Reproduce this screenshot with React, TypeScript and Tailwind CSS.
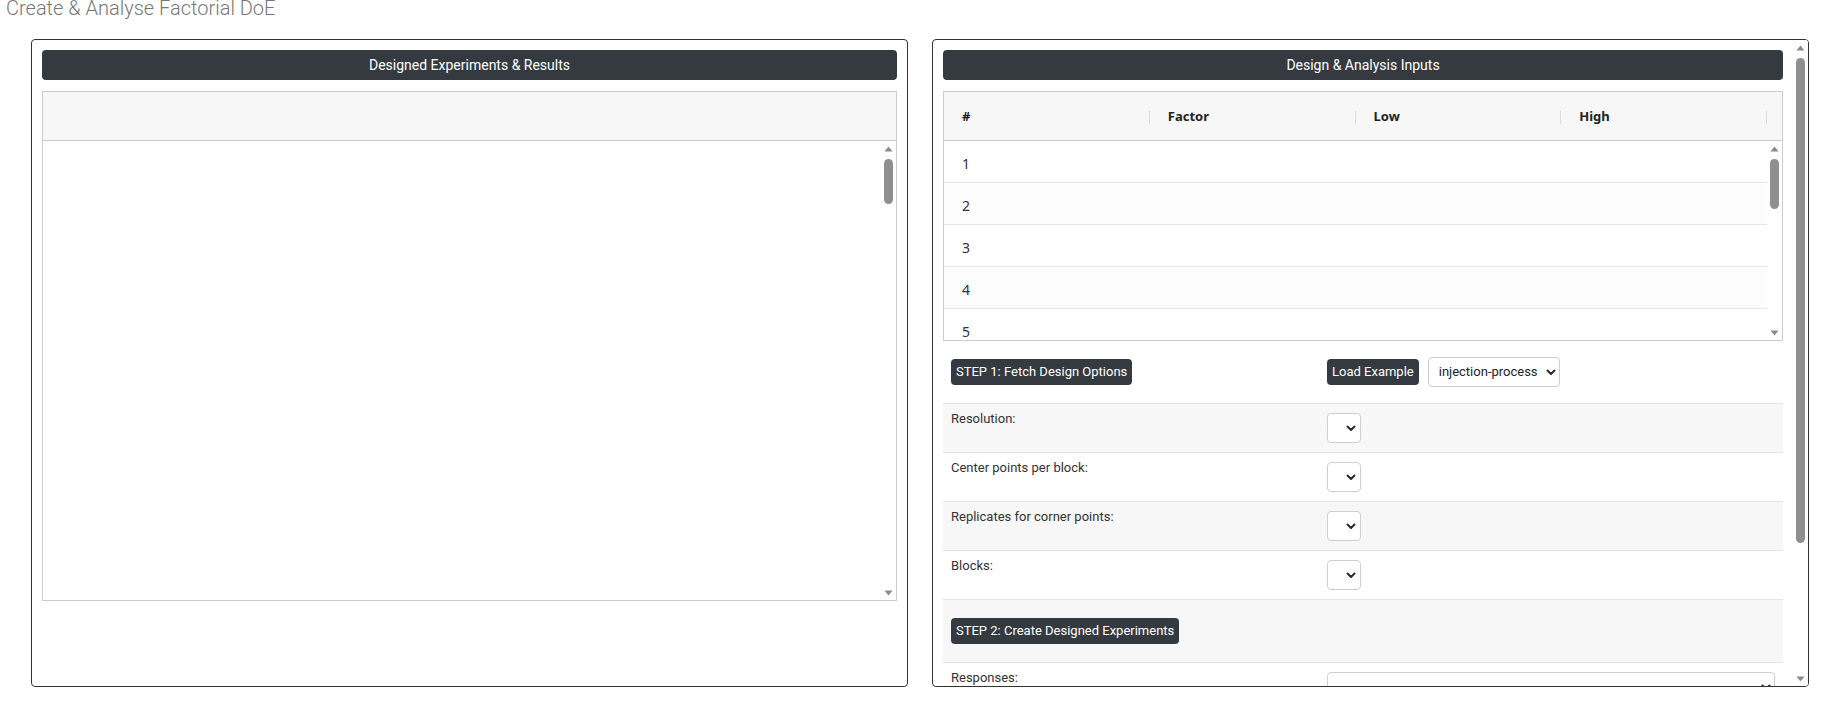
import React from "react";

function UpArrow() {
  return (
    <div className="flex h-[15px] w-full shrink-0 items-center justify-center">
      <svg width="9" height="6" viewBox="0 0 9 6">
        <path d="M4.5 0.5L8.5 5.5H0.5Z" fill="#8a8a8a" />
      </svg>
    </div>
  );
}

function DownArrow() {
  return (
    <div className="flex h-[15px] w-full shrink-0 items-center justify-center">
      <svg width="9" height="6" viewBox="0 0 9 6">
        <path d="M0.5 0.5H8.5L4.5 5.5Z" fill="#8a8a8a" />
      </svg>
    </div>
  );
}

function ScrollBar({ thumb }: { thumb: string }) {
  return (
    <div className="flex w-[15px] shrink-0 flex-col items-center bg-white">
      <UpArrow />
      <div className="flex min-h-0 w-full flex-1 flex-col items-center">
        <div className={"w-[9px] shrink-0 rounded-full bg-[#8f8f8f] " + thumb} />
      </div>
      <DownArrow />
    </div>
  );
}

function Chevron() {
  return (
    <svg width="10" height="7" viewBox="0 0 10 7">
      <path d="M1.5 1.5L5 5L8.5 1.5" fill="none" stroke="#2b2b2b" strokeWidth="2" strokeLinecap="round" strokeLinejoin="round" />
    </svg>
  );
}

function HeaderBar({ children }: { children: React.ReactNode }) {
  return (
    <div className="flex h-[30px] items-center justify-center rounded-[4px] bg-[#343a40] text-[14px] font-normal text-white">
      {children}
    </div>
  );
}

function DarkButton({ children }: { children: React.ReactNode }) {
  return (
    <div className="inline-flex h-[26px] shrink-0 items-center whitespace-nowrap rounded-[4px] bg-[#343a40] px-[5px] text-[13px] font-normal text-white">
      {children}
    </div>
  );
}

function SmallSelect() {
  return (
    <div className="flex h-[30px] w-[34px] items-center justify-end rounded-[4px] border border-[#cfcfcf] bg-white pr-[4px]">
      <Chevron />
    </div>
  );
}

function OptionRow({ label, gray }: { label: string; gray: boolean }) {
  return (
    <div className={"flex h-[49px] border-t border-[#e4e4e4] " + (gray ? "bg-[#f7f7f7]" : "bg-white")}>
      <div className="w-[376px] shrink-0 pl-[8px] pt-[5px] text-[13px] leading-[20px] text-[#333]">{label}</div>
      <div className="flex items-center pl-[8px]">
        <SmallSelect />
      </div>
    </div>
  );
}

function LeftPanel() {
  return (
    <div className="h-[648px] rounded-[4px] border border-[#333] px-[10px] pt-[10px]">
      <HeaderBar>Designed Experiments &amp; Results</HeaderBar>
      <div className="mt-[11px] flex h-[510px] flex-col border border-[#cccccc]">
        <div className="h-[49px] shrink-0 border-b border-[#cccccc] bg-[#f7f7f7]" />
        <div className="flex min-h-0 flex-1">
          <div className="flex-1" />
          <ScrollBar thumb="mt-[3px] h-[45px]" />
        </div>
      </div>
    </div>
  );
}

const cols = ["#", "Factor", "Low", "High"];

function RightPanel() {
  const rows = [1, 2, 3, 4, 5, 6];
  return (
    <div className="flex h-[648px] overflow-hidden rounded-[4px] border border-[#333]">
      <div className="min-w-0 flex-1 px-[10px] pt-[10px]">
        <HeaderBar>Design &amp; Analysis Inputs</HeaderBar>
        <div className="mt-[11px] flex h-[250px] flex-col border border-[#cccccc] font-['Noto_Sans',sans-serif]">
          <div className="flex h-[49px] shrink-0 border-b border-[#cccccc] bg-[#f7f7f7]">
            {cols.map((c) => (
              <div key={c} className="flex flex-1 items-center justify-between pl-[18px] pt-[2px] text-[13px] font-bold text-[#222]">
                <span>{c}</span>
                <span className="h-[13px] w-px bg-[#dddddd]" />
              </div>
            ))}
            <div className="w-[15px] shrink-0" />
          </div>
          <div className="flex min-h-0 flex-1">
            <div className="min-w-0 flex-1 overflow-hidden">
              {rows.map((r) => (
                <div
                  key={r}
                  className={"flex h-[42px] items-center border-b border-[#e6e6e6] pl-[18px] pt-[4px] text-[14px] text-[#333] " + (r % 2 === 0 ? "bg-[#fcfcfc]" : "bg-white")}
                >
                  {r}
                </div>
              ))}
            </div>
            <ScrollBar thumb="mt-[3px] h-[50px]" />
          </div>
        </div>

        <div className="flex h-[62px] items-center bg-white">
          <div className="w-[376px] shrink-0 pl-[8px]">
            <DarkButton>STEP 1: Fetch Design Options</DarkButton>
          </div>
          <div className="flex items-center gap-[9px] pl-[8px]">
            <DarkButton>Load Example</DarkButton>
            <div className="flex h-[30px] w-[132px] items-center justify-between rounded-[4px] border border-[#cfcfcf] bg-white pl-[10px] pr-[3px] text-[13px] text-[#212529]">
              <span>injection-process</span>
              <Chevron />
            </div>
          </div>
        </div>

        <OptionRow label="Resolution:" gray={true} />
        <OptionRow label="Center points per block:" gray={false} />
        <OptionRow label="Replicates for corner points:" gray={true} />
        <OptionRow label="Blocks:" gray={false} />

        <div className="flex h-[63px] items-center border-t border-[#e4e4e4] bg-[#f7f7f7] pl-[8px]">
          <DarkButton>STEP 2: Create Designed Experiments</DarkButton>
        </div>

        <div className="flex h-[60px] border-t border-[#e4e4e4] bg-white">
          <div className="w-[376px] shrink-0 pl-[8px] pt-[5px] text-[13px] leading-[20px] text-[#333]">Responses:</div>
          <div className="min-w-0 flex-1 pl-[8px] pr-[8px] pt-[9px]">
            <div className="flex h-[30px] w-full items-center justify-end rounded-[4px] border border-[#cfcfcf] bg-white pr-[3px]">
              <Chevron />
            </div>
          </div>
        </div>
      </div>
      <ScrollBar thumb="mt-[3px] h-[485px]" />
    </div>
  );
}

export default function App() {
  return (
    <div className="h-[707px] w-[1840px] overflow-hidden bg-white font-['Roboto',sans-serif] text-[#212529]">
      <h1 className="-mt-[4px] h-[24px] pl-[6px] text-[20px] font-light leading-[24px] text-[#777]">
        Create &amp; Analyse Factorial DoE
      </h1>
      <div className="mt-[19px] grid grid-cols-2 gap-[24px] px-[31px]">
        <LeftPanel />
        <RightPanel />
      </div>
    </div>
  );
}
